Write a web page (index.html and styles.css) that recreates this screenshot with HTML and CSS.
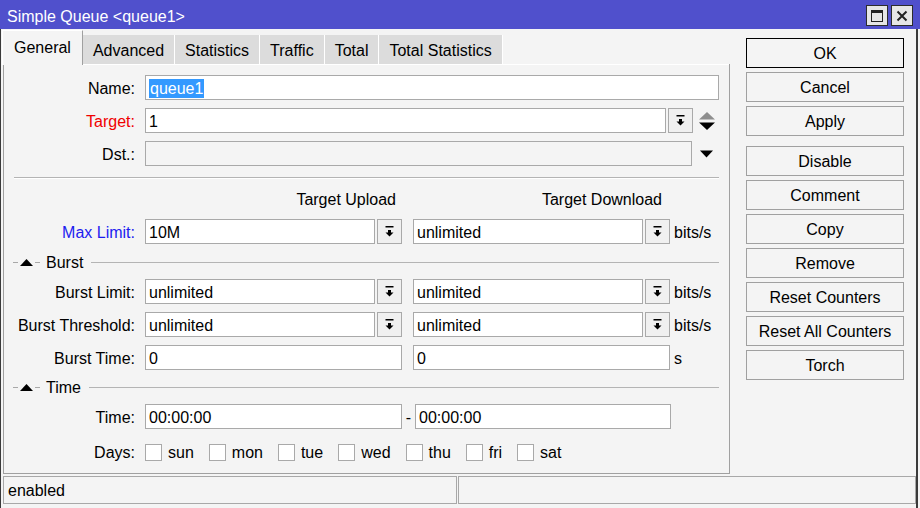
FILE: index.html
```html
<!DOCTYPE html>
<html>
<head>
<meta charset="utf-8">
<link rel="stylesheet" href="styles.css">
</head>
<body>
<div class="window">
  <div class="titlebar">
    <span class="title">Simple Queue &lt;queue1&gt;</span>
    <div class="wbtns">
      <span class="wbtn"><svg width="14" height="14" viewBox="0 0 14 14"><rect x="1.5" y="1.5" width="11" height="11" fill="none" stroke="#222" stroke-width="1"/><rect x="1" y="1" width="12" height="3" fill="#222"/></svg></span>
      <span class="wbtn"><svg width="14" height="14" viewBox="0 0 14 14"><path d="M2.5 2.5L11.5 11.5M11.5 2.5L2.5 11.5" stroke="#222" stroke-width="2"/></svg></span>
    </div>
  </div>
  <div class="frame">
    <div class="main">
      <div class="left">
        <div class="tabs">
          <div class="tab active">General</div>
          <div class="tab">Advanced</div>
          <div class="tab">Statistics</div>
          <div class="tab">Traffic</div>
          <div class="tab">Total</div>
          <div class="tab">Total Statistics</div>
          <div class="tab-fill"></div>
        </div>
        <div class="panel">
          <div class="row first">
            <div class="lbl">Name:</div>
            <div class="input grow"><span class="sel">queue1</span></div>
          </div>
          <div class="row">
            <div class="lbl red">Target:</div>
            <div class="input grow">1</div>
            <div class="ddbtn"><svg width="9" height="11" viewBox="0 0 9 11"><rect x="0.5" y="0" width="8" height="1.5" fill="#000"/><rect x="3" y="4" width="3" height="3" fill="#000"/><path d="M0.5 6.5H8.5L4.5 10.5Z" fill="#000"/></svg></div>
            <div class="updown"><svg width="16" height="20" viewBox="0 0 16 20"><path d="M0 8.5L8 1L16 8.5Z" fill="#8e8e8e"/><path d="M0 11.5L16 11.5L8 19Z" fill="#000"/></svg></div>
          </div>
          <div class="row">
            <div class="lbl">Dst.:</div>
            <div class="input grow disabled"></div>
            <div class="dstarrow"><svg width="13" height="8" viewBox="0 0 13 8"><path d="M0 0.5H13L6.5 7.5Z" fill="#000"/></svg></div>
          </div>
          <div class="sep"></div>
          <div class="hdr">
            <div class="hdr-cell">Target Upload</div>
            <div class="hdr-cell wide">Target Download</div>
          </div>
          <div class="row mx">
            <div class="lbl blue">Max Limit:</div>
            <div class="pair"><div class="input grow">10M</div><div class="ddbtn"><svg width="9" height="11" viewBox="0 0 9 11"><rect x="0.5" y="0" width="8" height="1.5" fill="#000"/><rect x="3" y="4" width="3" height="3" fill="#000"/><path d="M0.5 6.5H8.5L4.5 10.5Z" fill="#000"/></svg></div></div>
            <div class="pair second"><div class="input grow">unlimited</div><div class="ddbtn"><svg width="9" height="11" viewBox="0 0 9 11"><rect x="0.5" y="0" width="8" height="1.5" fill="#000"/><rect x="3" y="4" width="3" height="3" fill="#000"/><path d="M0.5 6.5H8.5L4.5 10.5Z" fill="#000"/></svg></div></div>
            <div class="unit">bits/s</div>
          </div>
          <div class="section sec-burst">
            <span class="dash"></span>
            <svg class="tri" width="13" height="7" viewBox="0 0 13 7"><path d="M0 7L6.5 0L13 7Z" fill="#000"/></svg>
            <span class="dash"></span>
            <span class="sec-text">Burst</span>
            <span class="sec-line"></span>
          </div>
          <div class="row after-sec">
            <div class="lbl">Burst Limit:</div>
            <div class="pair"><div class="input grow">unlimited</div><div class="ddbtn"><svg width="9" height="11" viewBox="0 0 9 11"><rect x="0.5" y="0" width="8" height="1.5" fill="#000"/><rect x="3" y="4" width="3" height="3" fill="#000"/><path d="M0.5 6.5H8.5L4.5 10.5Z" fill="#000"/></svg></div></div>
            <div class="pair second"><div class="input grow">unlimited</div><div class="ddbtn"><svg width="9" height="11" viewBox="0 0 9 11"><rect x="0.5" y="0" width="8" height="1.5" fill="#000"/><rect x="3" y="4" width="3" height="3" fill="#000"/><path d="M0.5 6.5H8.5L4.5 10.5Z" fill="#000"/></svg></div></div>
            <div class="unit">bits/s</div>
          </div>
          <div class="row">
            <div class="lbl">Burst Threshold:</div>
            <div class="pair"><div class="input grow">unlimited</div><div class="ddbtn"><svg width="9" height="11" viewBox="0 0 9 11"><rect x="0.5" y="0" width="8" height="1.5" fill="#000"/><rect x="3" y="4" width="3" height="3" fill="#000"/><path d="M0.5 6.5H8.5L4.5 10.5Z" fill="#000"/></svg></div></div>
            <div class="pair second"><div class="input grow">unlimited</div><div class="ddbtn"><svg width="9" height="11" viewBox="0 0 9 11"><rect x="0.5" y="0" width="8" height="1.5" fill="#000"/><rect x="3" y="4" width="3" height="3" fill="#000"/><path d="M0.5 6.5H8.5L4.5 10.5Z" fill="#000"/></svg></div></div>
            <div class="unit">bits/s</div>
          </div>
          <div class="row">
            <div class="lbl">Burst Time:</div>
            <div class="pair"><div class="input grow">0</div></div>
            <div class="pair second"><div class="input grow">0</div></div>
            <div class="unit">s</div>
          </div>
          <div class="section sec-time">
            <span class="dash"></span>
            <svg class="tri" width="13" height="7" viewBox="0 0 13 7"><path d="M0 7L6.5 0L13 7Z" fill="#000"/></svg>
            <span class="dash"></span>
            <span class="sec-text">Time</span>
            <span class="sec-line"></span>
          </div>
          <div class="row after-sec">
            <div class="lbl">Time:</div>
            <div class="pair"><div class="input grow">00:00:00</div></div>
            <div class="dashsym">-</div>
            <div class="pair time2"><div class="input grow">00:00:00</div></div>
          </div>
          <div class="days">
            <div class="lbl">Days:</div>
            <div class="day"><span class="cb"></span>sun</div>
            <div class="day"><span class="cb"></span>mon</div>
            <div class="day"><span class="cb"></span>tue</div>
            <div class="day"><span class="cb"></span>wed</div>
            <div class="day"><span class="cb"></span>thu</div>
            <div class="day"><span class="cb"></span>fri</div>
            <div class="day"><span class="cb"></span>sat</div>
          </div>
        </div>
      </div>
      <div class="actions">
        <div class="btn ok">OK</div>
        <div class="btn">Cancel</div>
        <div class="btn">Apply</div>
        <div class="btn group">Disable</div>
        <div class="btn">Comment</div>
        <div class="btn">Copy</div>
        <div class="btn">Remove</div>
        <div class="btn">Reset Counters</div>
        <div class="btn">Reset All Counters</div>
        <div class="btn">Torch</div>
      </div>
    </div>
    <div class="status">
      <div class="cell cell-l">enabled</div>
      <div class="cell cell-r"></div>
    </div>
  </div>
</div>
</body>
</html>
```

FILE: styles.css
```css
* { box-sizing: border-box; }
html, body { margin: 0; padding: 0; }
body {
  background: #f4f4f4;
  font-family: "Liberation Sans", Arial, sans-serif;
  font-size: 16px;
  color: #000;
}
.window {
  width: 920px;
  height: 508px;
  display: flex;
  flex-direction: column;
  overflow: hidden;
}
.titlebar {
  height: 29px;
  flex: none;
  background: #5050cc;
  color: #fff;
  display: flex;
  align-items: center;
  padding-left: 7px;
  padding-right: 7px;
}
.title { line-height: 1; padding-top: 4px; }
.wbtns { margin-left: auto; display: flex; gap: 3px; padding-top: 2px; }
.wbtn {
  width: 22px;
  height: 21px;
  background: #e6e6e6;
  border: 1px solid #2c2c2c;
  display: flex;
  align-items: center;
  justify-content: center;
}
.frame {
  flex: 1;
  width: 918px;
  display: flex;
  flex-direction: column;
  border-left: 1px solid #3a3a3a;
  border-right: 2px solid #3a3a3a;
}
.main { display: flex; padding-left: 2px; }
.left { width: 727px; flex: none; display: flex; flex-direction: column; }
.tabs {
  margin-top: 1px;
  height: 35px;
  display: flex;
  align-items: flex-end;
}
.tab {
  height: 30px;
  padding: 2px 10px 0;
  background: #dcdcdc;
  border-right: 1px solid #fff;
  border-bottom: 1px solid #fff;
  display: flex;
  align-items: center;
  white-space: nowrap;
}
.tab.active {
  height: 35px;
  background: #f4f4f4;
  border-top: 1px solid #fff;
  border-left: 1px solid #fff;
  border-right: 1px solid #a0a0a0;
  border-bottom: none;
  padding: 0 11px 0 11px;
  margin-left: -1px;
}
.tab-fill { flex: 1; height: 1px; background: #fff; border-right: 1px solid #a0a0a0; }
.panel {
  height: 409px;
  border-left: 1px solid #a0a0a0;
  border-right: 1px solid #a0a0a0;
  border-bottom: 1px solid #a0a0a0;
  padding: 10px 10px 0 0;
}
.row {
  display: flex;
  align-items: center;
  height: 25px;
  margin-top: 8px;
}
.row.first { margin-top: 0; }
.row.mx { margin-top: 11px; }
.row.after-sec { margin-top: 8px; }
.lbl {
  width: 131px;
  flex: none;
  text-align: right;
  margin-right: 10px;
  white-space: nowrap;
  padding-top: 2px;
}
.unit, .dashsym { padding-top: 2px; }
.red { color: #f00000; }
.blue { color: #1c1cf0; }
.input {
  height: 25px;
  border: 1px solid #a9a9a9;
  background: #fff;
  padding: 2px 0 0 3px;
  display: flex;
  align-items: center;
  white-space: nowrap;
  overflow: hidden;
}
.input.disabled { background: #f4f4f4; }
.grow { flex: 1; min-width: 0; }
.sel { background: #3399ff; color: #fff; padding: 1px 1px 0; line-height: 18px; }
.ddbtn {
  width: 25px;
  height: 25px;
  flex: none;
  margin-left: 2px;
  border: 1px solid #a9a9a9;
  background: #f0f0f0;
  display: flex;
  align-items: center;
  justify-content: center;
}
.updown { width: 16px; margin-left: 6px; margin-right: 4px; display: flex; }
.dstarrow { width: 13px; margin-left: 8px; margin-right: 6px; display: flex; }
.sep {
  margin: 11px 0 0 10px;
  height: 2px;
  border-top: 1px solid #b4b4b4;
  border-bottom: 1px solid #fff;
}
.hdr {
  display: flex;
  margin-top: 11px;
  height: 18px;
  align-items: center;
  padding: 2px 0 0 141px;
}
.hdr-cell { width: 257px; text-align: right; padding-right: 6px; }
.hdr-cell.wide { margin-left: 11px; padding-right: 8px; }
.pair { display: flex; width: 257px; flex: none; }
.pair.second { margin-left: 11px; }
.pair.time2 { width: 256px; }
.unit { margin-left: 4px; }
.dashsym { width: 13px; text-align: center; }
.section {
  display: flex;
  align-items: center;
  height: 18px;
  margin-top: 8px;
  padding-left: 9px;
}
.section.sec-burst { margin-top: 9px; }
.dash { width: 5px; height: 1px; background: #a8a8a8; }
.tri { margin: 0 2px 0 2px; }
.sec-text { margin-left: 6px; padding-top: 2px; }
.sec-line { flex: 1; height: 1px; background: #b4b4b4; margin-left: 8px; }
.days {
  display: flex;
  align-items: center;
  height: 18px;
  margin-top: 14px;
}
.day { display: flex; align-items: center; margin-right: 15px; padding-top: 2px; }
.day .cb { margin-top: -2px; }
.cb {
  width: 17px;
  height: 17px;
  border: 1px solid #a9a9a9;
  background: #fff;
  margin-right: 6px;
}
.actions {
  width: 158px;
  flex: none;
  margin-left: 16px;
  padding-top: 9px;
  display: flex;
  flex-direction: column;
  gap: 4px;
}
.btn {
  height: 30px;
  border: 1px solid #a0a0a0;
  background: #f4f4f4;
  display: flex;
  align-items: center;
  justify-content: center;
  white-space: nowrap;
  padding-top: 2px;
}
.btn.ok { border-color: #000; }
.btn.group { margin-top: 6px; }
.status {
  display: flex;
  margin-top: 2px;
  margin-left: 2px;
  height: 28px;
}
.cell {
  border: 1px solid #a8a8a8;
  display: flex;
  align-items: center;
  padding: 2px 0 0 4px;
}
.cell-l { width: 454px; }
.cell-r { flex: 1; margin-left: 1px; }
```
